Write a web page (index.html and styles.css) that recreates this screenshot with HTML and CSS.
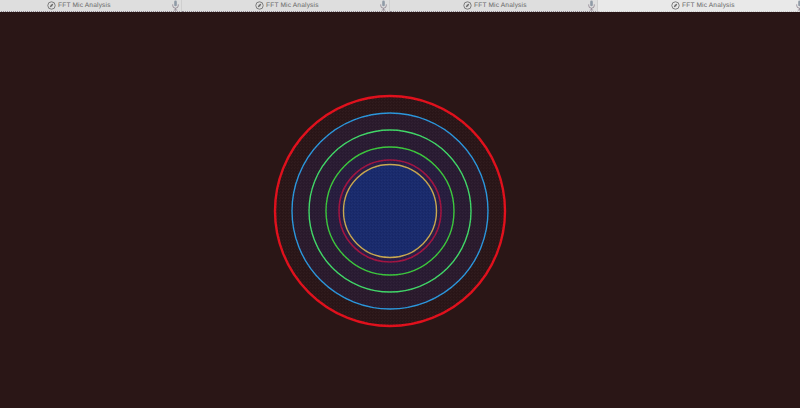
FILE: index.html
```html
<!DOCTYPE html>
<html lang="en">
<head>
<meta charset="utf-8">
<title>FFT Mic Analysis</title>
<link rel="stylesheet" href="styles.css">
</head>
<body>
<svg class="defs" width="0" height="0" aria-hidden="true">
  <symbol id="compass" viewBox="0 0 9 9">
    <circle cx="4.5" cy="4.5" r="3.7" fill="none" stroke="#666" stroke-width="0.8"/>
    <path d="M6.4 2.6 5.2 5.2 2.6 6.4 3.8 3.8z" fill="#666"/>
  </symbol>
  <symbol id="mic" viewBox="0 0 9 11">
    <rect x="3.2" y="0.6" width="2.6" height="5.6" rx="1.3" fill="#8f9aa6"/>
    <path d="M1.7 4.4v1a2.8 2.8 0 0 0 5.6 0v-1M4.5 8.2v1.6M2.8 10h3.4" fill="none" stroke="#8a7f8c" stroke-width="0.8"/>
  </symbol>
  <pattern id="dots" width="3" height="3" patternUnits="userSpaceOnUse">
    <rect x="0" y="0" width="1" height="1" fill="#ffffff" opacity="0.03"/>
    <rect x="2" y="1" width="1" height="1" fill="#000000" opacity="0.07"/>
    <rect x="1" y="2" width="1" height="1" fill="#ffffff" opacity="0.025"/>
  </pattern>
</svg>
<nav class="tabs">
  <div class="tab"><svg class="tab-icon"><use href="#compass"/></svg><span class="tab-title">FFT Mic Analysis</span><svg class="tab-mic"><use href="#mic"/></svg></div>
  <div class="tab"><svg class="tab-icon"><use href="#compass"/></svg><span class="tab-title">FFT Mic Analysis</span><svg class="tab-mic"><use href="#mic"/></svg></div>
  <div class="tab"><svg class="tab-icon"><use href="#compass"/></svg><span class="tab-title">FFT Mic Analysis</span><svg class="tab-mic"><use href="#mic"/></svg></div>
  <div class="tab active"><svg class="tab-icon"><use href="#compass"/></svg><span class="tab-title">FFT Mic Analysis</span><svg class="tab-mic"><use href="#mic"/></svg></div>
</nav>
<main class="stage">
  <svg class="scope" viewBox="0 0 800 396" width="800" height="396">
    <circle cx="390" cy="199" r="115" fill="#2a1618" stroke="#e0101c" stroke-width="2.4"/>
    <circle cx="390" cy="199" r="98" fill="#2a1a2c" stroke="#2a96dc" stroke-width="1.4"/>
    <circle cx="390" cy="199" r="81" fill="#291b32" stroke="#40d868" stroke-width="1.4"/>
    <circle cx="390" cy="199" r="64" fill="#271d3e" stroke="#3cc83c" stroke-width="1.4"/>
    <circle cx="390" cy="199" r="51" fill="#271d48" stroke="#a01440" stroke-width="1.6"/>
    <circle cx="390" cy="199" r="46.5" fill="#192a6c" stroke="#c8a850" stroke-width="1.4"/>
    <circle cx="390" cy="199" r="115" fill="url(#dots)"/>
  </svg>
</main>
</body>
</html>
```
FILE: styles.css
```css
html, body {
  margin: 0;
  padding: 0;
  width: 800px;
  height: 408px;
  overflow: hidden;
  background: #2a1616;
}
.defs {
  display: block;
  height: 0;
}
.tabs {
  display: flex;
  height: 12px;
  margin-left: -26px;
  background: #dcdcdc;
  overflow: hidden;
}
.tab {
  flex: 0 0 208px;
  box-sizing: border-box;
  height: 12px;
  display: flex;
  align-items: center;
  padding-left: 73px;
  border-right: 1px solid #cfcfcf;
  border-bottom: 1px dotted #8f8690;
  font: 6.6px "Liberation Sans", Arial, sans-serif;
  letter-spacing: 0.16px;
  text-rendering: geometricPrecision;
  color: #666;
  background: #dedede;
}
.tab.active {
  background: #e9e9e9;
  border-bottom-color: #c9c6c8;
}
.tab-icon {
  width: 9px;
  height: 9px;
  flex: none;
}
.tab-title {
  margin-left: 2px;
  width: 105px;
  white-space: nowrap;
}
.tab-mic {
  width: 9px;
  height: 11px;
  flex: none;
  margin-left: 8px;
}
.stage {
  height: 396px;
}
.scope {
  display: block;
}
```
